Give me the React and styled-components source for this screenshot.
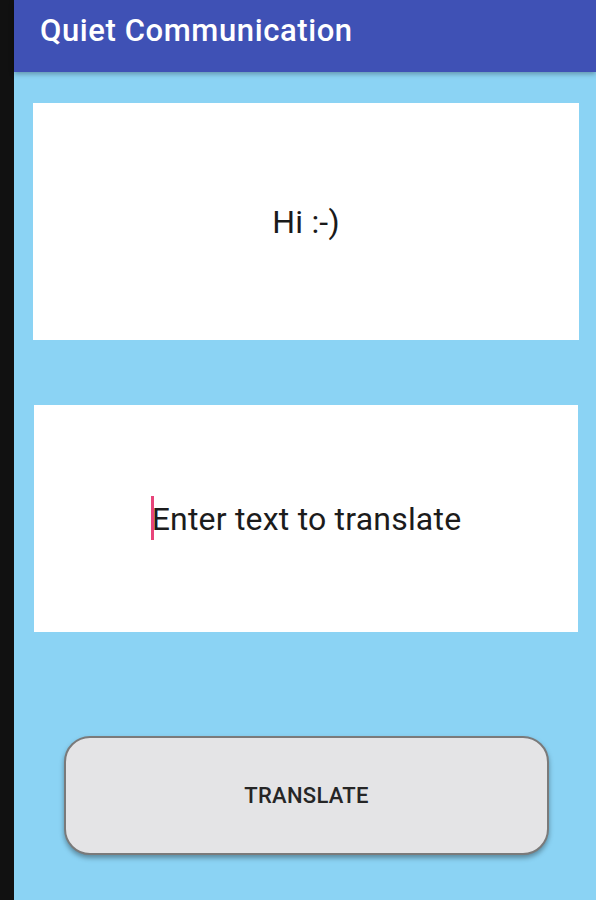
import React from "react";
import styled, { createGlobalStyle } from "styled-components";

const GlobalStyle = createGlobalStyle`
  html, body {
    margin: 0;
    padding: 0;
    background: #111111;
    font-family: Roboto, "Noto Sans", sans-serif;
  }
`;

// device frame: dark bezel on the left, the app fills the rest
const Frame = styled.div`
  display: flex;
  height: 900px;
  width: 596px;
  background: #111111;
`;

const Bezel = styled.div`
  width: 14px;
  flex-shrink: 0;
`;

const Screen = styled.div`
  flex: 1;
  display: flex;
  flex-direction: column;
  background: #8bd3f4;
`;

const AppBar = styled.header`
  height: 72px;
  flex-shrink: 0;
  background: #3f51b5;
  display: flex;
  align-items: center;
  padding: 0 0 12px 26px;
  box-sizing: border-box;
  box-shadow: 0 2px 5px rgba(0, 0, 0, 0.3);
  position: relative;
  z-index: 1;
`;

const Title = styled.h1`
  margin: 0;
  color: #ffffff;
  font-size: 31px;
  font-weight: 500;
  letter-spacing: 0.6px;
`;

const Content = styled.main`
  flex: 1;
  display: flex;
  flex-direction: column;
  padding: 31px 17px 0 19px;
`;

const Card = styled.div`
  background: #ffffff;
  height: ${props => props.h}px;
  margin: ${props => props.m};
  display: flex;
  align-items: center;
  justify-content: center;
  font-size: 32px;
  letter-spacing: 0.2px;
  color: #1a1a1a;
`;

const Caret = styled.span`
  display: inline-block;
  width: 3px;
  height: 44px;
  background: #e8457a;
  margin-right: -2px;
  position: relative;
  top: -1px;
`;

const Hint = styled.span`
  display: flex;
  align-items: center;
  color: #1c1c1c;
`;

const ButtonRow = styled.div`
  display: flex;
  justify-content: flex-start;
  padding: 104px 0 0 31px;
`;

const Button = styled.button`
  width: 485px;
  height: 119px;
  border: 2px solid #7a7a7a;
  border-radius: 26px;
  background: #e4e4e6;
  box-shadow: 0 3px 5px rgba(0, 0, 0, 0.35);
  font-family: Roboto, "Noto Sans", sans-serif;
  font-size: 22px;
  font-weight: 500;
  color: #262626;
  letter-spacing: 0.3px;
  padding: 0;
`;

const App = () => {
  return (
    <Frame>
      <GlobalStyle />
      <Bezel />
      <Screen>
        <AppBar>
          <Title>Quiet Communication</Title>
        </AppBar>
        <Content>
          <Card h={237} m="0 0 0 0">
            Hi :-)
          </Card>
          <Card h={227} m="65px 1px 0 1px">
            <Hint>
              <Caret />
              Enter text to translate
            </Hint>
          </Card>
          <ButtonRow>
            <Button>TRANSLATE</Button>
          </ButtonRow>
        </Content>
      </Screen>
    </Frame>
  );
};

export default App;
